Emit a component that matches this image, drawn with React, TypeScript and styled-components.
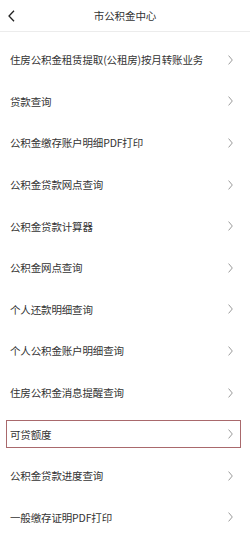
import styled, { createGlobalStyle } from "styled-components";

const GlobalStyle = createGlobalStyle`
    html, body {
        margin: 0;
        padding: 0;
        background: #ffffff;
    }
    body {
        font-family: "Noto Sans CJK SC", "Noto Sans", sans-serif;
        color: #333333;
    }
`;

const items = [
    "住房公积金租赁提取(公租房)按月转账业务",
    "贷款查询",
    "公积金缴存账户明细PDF打印",
    "公积金贷款网点查询",
    "公积金贷款计算器",
    "公积金网点查询",
    "个人还款明细查询",
    "个人公积金账户明细查询",
    "住房公积金消息提醒查询",
    "可贷额度",
    "公积金贷款进度查询",
    "一般缴存证明PDF打印",
];

const SELECTED = "可贷额度";

const BackIcon = () => (
    <svg width="7" height="12" viewBox="0 0 7 12">
        <polyline
            points="6,0.7 1,6 6,11.3"
            fill="none"
            stroke="#222"
            strokeWidth="1.3"
        />
    </svg>
);

const Chevron = () => (
    <svg width="5" height="10" viewBox="0 0 5 10">
        <polyline
            points="0.6,0.6 4.3,5 0.6,9.4"
            fill="none"
            stroke="#8f8f8f"
            strokeWidth="0.9"
        />
    </svg>
);

const App = () => {
    return (
        <Page>
            <GlobalStyle />
            <Header>
                <BackButton>
                    <BackIcon />
                </BackButton>
                <Title>市公积金中心</Title>
            </Header>
            <List>
                {items.map((label) => (
                    <Row key={label}>
                        <Item $selected={label === SELECTED}>
                            <Label>{label}</Label>
                            <Chevron />
                        </Item>
                    </Row>
                ))}
            </List>
        </Page>
    );
};

export default App;

const Page = styled.div`
    width: 250px;
    height: 540px;
    overflow: hidden;
    background: #ffffff;
`;

const Header = styled.div`
    position: relative;
    height: 31px;
    display: flex;
    align-items: center;
    justify-content: center;
    border-bottom: 1px solid #ececec;
`;

const BackButton = styled.div`
    position: absolute;
    left: 8px;
    top: 10px;
    display: flex;
`;

const Title = styled.div`
    font-size: 10.5px;
    color: #333333;
    letter-spacing: -0.1px;
`;

const List = styled.div`
    padding-top: 7px;
    display: flex;
    flex-direction: column;
`;

const Row = styled.div`
    height: 41.6px;
    box-sizing: border-box;
    padding: 0 9px 0 6px;
    display: flex;
    align-items: center;
`;

const Item = styled.div<{ $selected: boolean }>`
    flex: 1;
    height: 28px;
    box-sizing: border-box;
    padding: 0 7px 0 3px;
    display: flex;
    align-items: center;
    justify-content: space-between;
    border: 1px solid ${(p) => (p.$selected ? "#a9696c" : "transparent")};
`;

const Label = styled.span`
    font-size: 10.5px;
    color: #333333;
    letter-spacing: -0.15px;
    white-space: nowrap;
`;
